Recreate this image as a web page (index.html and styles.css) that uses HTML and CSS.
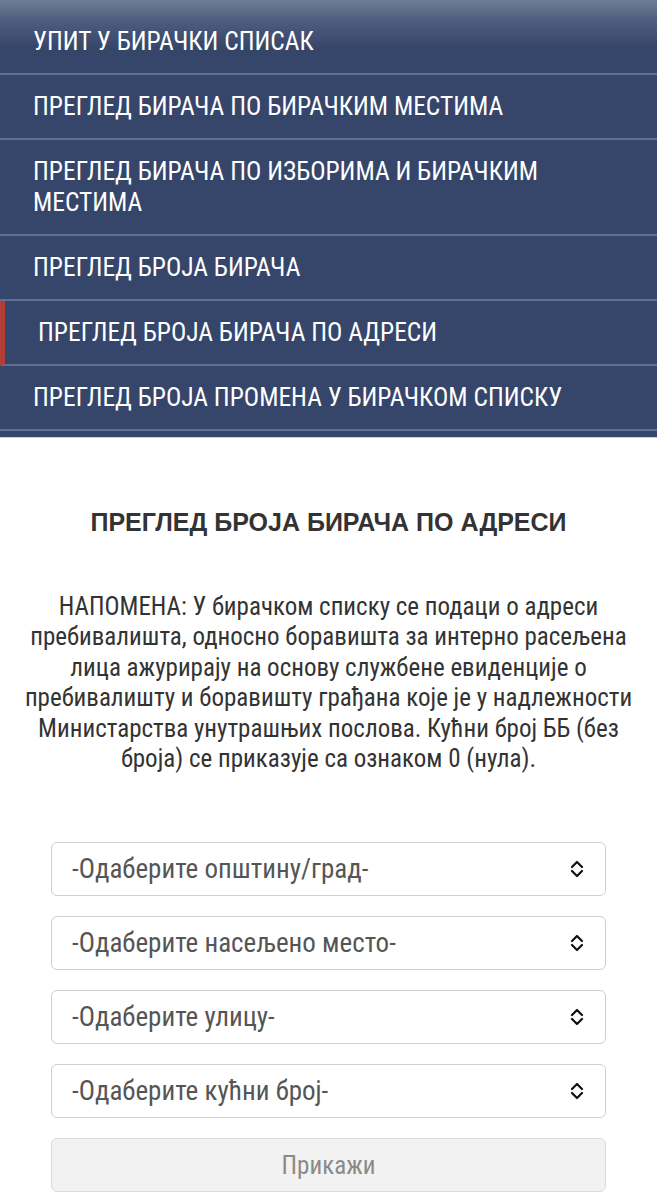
FILE: index.html
```html
<!DOCTYPE html>
<html lang="sr">
<head>
<meta charset="utf-8">
<title>Преглед броја бирача по адреси</title>
<link rel="stylesheet" href="styles.css">
</head>
<body>
<nav class="menu">
  <a class="menu-item first" href="#">УПИТ У БИРАЧКИ СПИСАК</a>
  <a class="menu-item" href="#">ПРЕГЛЕД БИРАЧА ПО БИРАЧКИМ МЕСТИМА</a>
  <a class="menu-item" href="#">ПРЕГЛЕД БИРАЧА ПО ИЗБОРИМА И БИРАЧКИМ МЕСТИМА</a>
  <a class="menu-item" href="#">ПРЕГЛЕД БРОЈА БИРАЧА</a>
  <a class="menu-item active" href="#">ПРЕГЛЕД БРОЈА БИРАЧА ПО АДРЕСИ</a>
  <a class="menu-item" href="#">ПРЕГЛЕД БРОЈА ПРОМЕНА У БИРАЧКОМ СПИСКУ</a>
</nav>
<main class="content">
  <h1 class="title">ПРЕГЛЕД БРОЈА БИРАЧА ПО АДРЕСИ</h1>
  <p class="note">НАПОМЕНА: У бирачком списку се подаци о адреси пребивалишта, односно боравишта за интерно расељена лица ажурирају на основу службене евиденције о пребивалишту и боравишту грађана које је у надлежности Министарства унутрашњих послова. Кућни број ББ (без броја) се приказује са ознаком 0 (нула).</p>
  <form class="form">
    <div class="select-wrap">
      <select class="select"><option>-Одаберите општину/град-</option></select>
      <svg class="chev" width="16" height="22" viewBox="0 0 16 22"><path d="M3 9 L8 4 L13 9 M3 13 L8 18 L13 13" fill="none" stroke="#111" stroke-width="2.2" stroke-linecap="round" stroke-linejoin="round"/></svg>
    </div>
    <div class="select-wrap">
      <select class="select"><option>-Одаберите насељено место-</option></select>
      <svg class="chev" width="16" height="22" viewBox="0 0 16 22"><path d="M3 9 L8 4 L13 9 M3 13 L8 18 L13 13" fill="none" stroke="#111" stroke-width="2.2" stroke-linecap="round" stroke-linejoin="round"/></svg>
    </div>
    <div class="select-wrap">
      <select class="select"><option>-Одаберите улицу-</option></select>
      <svg class="chev" width="16" height="22" viewBox="0 0 16 22"><path d="M3 9 L8 4 L13 9 M3 13 L8 18 L13 13" fill="none" stroke="#111" stroke-width="2.2" stroke-linecap="round" stroke-linejoin="round"/></svg>
    </div>
    <div class="select-wrap">
      <select class="select"><option>-Одаберите кућни број-</option></select>
      <svg class="chev" width="16" height="22" viewBox="0 0 16 22"><path d="M3 9 L8 4 L13 9 M3 13 L8 18 L13 13" fill="none" stroke="#111" stroke-width="2.2" stroke-linecap="round" stroke-linejoin="round"/></svg>
    </div>
    <button class="btn" type="button" disabled>Прикажи</button>
  </form>
</main>
</body>
</html>
```
FILE: styles.css
```css
html, body {
  margin: 0;
  padding: 0;
  background: #fff;
}
body {
  font-family: "Roboto Condensed", "Roboto", "Liberation Sans", sans-serif;
  font-stretch: condensed;
  color: #333;
}
.menu {
  display: flex;
  flex-direction: column;
  background: #36466a;
  padding-bottom: 6px;
  border-bottom: 1px solid #c9d0dc;
}
.menu-item {
  display: block;
  padding: 16px 20px 16px 33px;
  font-size: 25.5px;
  font-weight: 380;
  line-height: 31px;
  color: #fff;
  text-decoration: none;
  border-bottom: 2px solid #5f6f92;
}
.menu-item.first {
  padding-top: 26px;
  background: linear-gradient(to bottom, #707d99 0px, #4f5d7e 20px, #36466a 48px);
}
.menu-item.active {
  border-left: 5px solid #b23f37;
  padding-left: 33px;
}
.content {
  padding: 69px 0 0;
}
.title {
  margin: 0;
  text-align: center;
  font-family: "Liberation Sans", Arial, sans-serif;
  font-stretch: normal;
  font-weight: bold;
  font-size: 25px;
  line-height: 30px;
  color: #333;
}
.note {
  margin: 55px 20px 0;
  text-align: center;
  font-size: 25px;
  font-weight: 380;
  line-height: 30.4px;
  color: #333;
}
.form {
  display: flex;
  flex-direction: column;
  gap: 20px;
  padding: 68px 51px 0;
}
.select-wrap {
  position: relative;
}
.select {
  display: block;
  width: 100%;
  height: 54px;
  box-sizing: border-box;
  -webkit-appearance: none;
  appearance: none;
  border: 1px solid #cfcfcf;
  border-radius: 6px;
  background: #fff;
  padding: 0 50px 0 20px;
  font-family: inherit;
  font-stretch: condensed;
  font-size: 27px;
  font-weight: 380;
  color: #555;
  outline: none;
}
.chev {
  position: absolute;
  right: 21px;
  top: 16px;
  pointer-events: none;
}
.btn {
  display: block;
  width: 100%;
  height: 54px;
  box-sizing: border-box;
  border: 1px solid #dcdcdc;
  border-radius: 6px;
  background: #f2f2f2;
  font-family: inherit;
  font-stretch: condensed;
  font-size: 25px;
  font-weight: 380;
  color: #8a8a8a;
}
```
